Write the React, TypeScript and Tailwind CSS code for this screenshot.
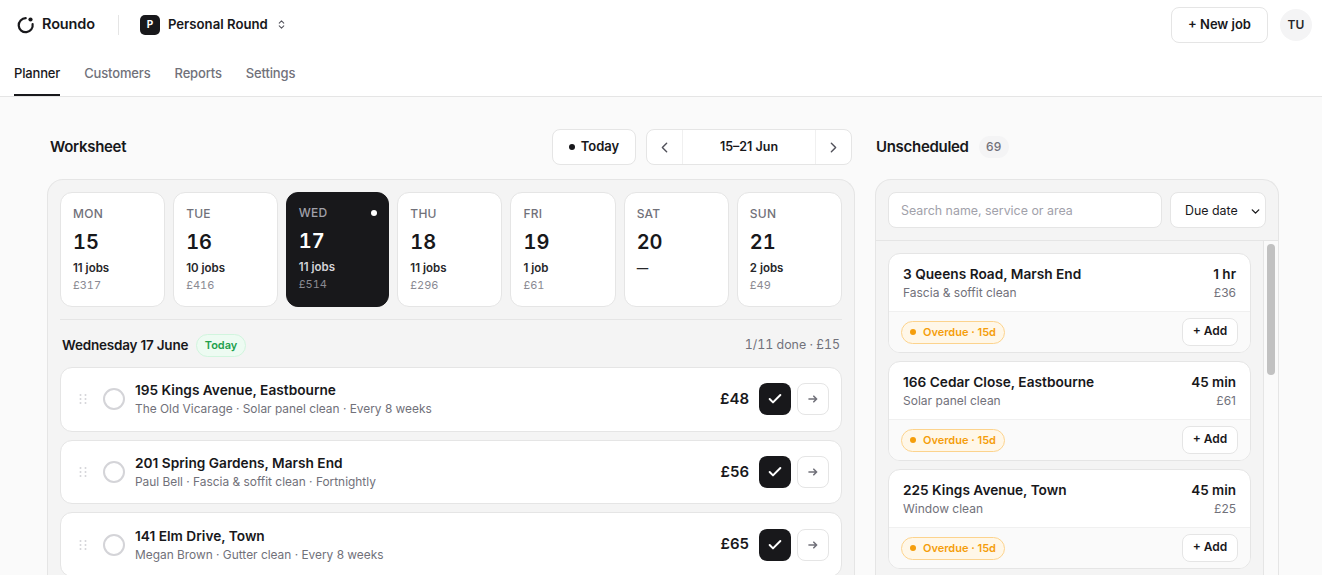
import { ChevronLeft, ChevronRight, ChevronsUpDown, Check, ChevronDown } from "lucide-react";

const days = [
  { name: "MON", date: "15", jobs: "11 jobs", total: "£317" },
  { name: "TUE", date: "16", jobs: "10 jobs", total: "£416" },
  { name: "WED", date: "17", jobs: "11 jobs", total: "£514", active: true },
  { name: "THU", date: "18", jobs: "11 jobs", total: "£296" },
  { name: "FRI", date: "19", jobs: "1 job", total: "£61" },
  { name: "SAT", date: "20", jobs: "—", total: "" },
  { name: "SUN", date: "21", jobs: "2 jobs", total: "£49" },
];

const jobs = [
  { address: "195 Kings Avenue, Eastbourne", detail: "The Old Vicarage · Solar panel clean · Every 8 weeks", price: "£48" },
  { address: "201 Spring Gardens, Marsh End", detail: "Paul Bell · Fascia & soffit clean · Fortnightly", price: "£56" },
  { address: "141 Elm Drive, Town", detail: "Megan Brown · Gutter clean · Every 8 weeks", price: "£65" },
];

const unscheduled = [
  { address: "3 Queens Road, Marsh End", service: "Fascia & soffit clean", time: "1 hr", price: "£36" },
  { address: "166 Cedar Close, Eastbourne", service: "Solar panel clean", time: "45 min", price: "£61" },
  { address: "225 Kings Avenue, Town", service: "Window clean", time: "45 min", price: "£25" },
];

function DragHandle() {
  return (
    <svg width="8" height="10" viewBox="0 0 8 10" className="shrink-0 fill-[#d4d4d8]">
      <circle cx="1.5" cy="1" r="1" />
      <circle cx="6.5" cy="1" r="1" />
      <circle cx="1.5" cy="5" r="1" />
      <circle cx="6.5" cy="5" r="1" />
      <circle cx="1.5" cy="9" r="1" />
      <circle cx="6.5" cy="9" r="1" />
    </svg>
  );
}

function DayCard({ day }: { day: (typeof days)[number] }) {
  if (day.active) {
    return (
      <div className="relative h-[115px] rounded-xl border border-[#18181b] bg-[#18181b] pt-[12px] pr-3 pl-[11.5px]">
        <span className="absolute right-[11px] top-[17px] h-[6px] w-[6px] rounded-full bg-white" />
        <p className="text-xs leading-4 font-medium tracking-[0.02em] text-[#a1a1aa]">{day.name}</p>
        <p className="mt-[6px] text-xl leading-7 font-semibold text-white tabular-nums">{day.date}</p>
        <p className="mt-1 text-[11.5px] leading-4 font-semibold text-[#d4d4d8]">{day.jobs}</p>
        <p className="mt-px text-[11px] leading-4 text-[#8a8a92] tabular-nums">{day.total}</p>
      </div>
    );
  }
  return (
    <div className="h-[115px] rounded-xl border border-[#e5e5e5] bg-white px-3 pt-[13px]">
      <p className="text-xs leading-4 font-medium tracking-[0.02em] text-[#71717a]">{day.name}</p>
      <p className="mt-[6px] text-xl leading-7 font-semibold text-[#18181b] tabular-nums">{day.date}</p>
      <p className="mt-1 text-[11.5px] leading-4 font-semibold text-[#27272a]">{day.jobs}</p>
      <p className="mt-px text-[11px] leading-4 text-[#8a8a92] tabular-nums">{day.total}</p>
    </div>
  );
}

function JobRow({ job }: { job: (typeof jobs)[number] }) {
  return (
    <div className="flex h-[64.65px] shrink-0 items-center rounded-xl border border-[#e5e5e5] bg-white pr-3 pl-[18px]">
      <DragHandle />
      <span className="ml-4 h-[22px] w-[22px] shrink-0 rounded-full border-2 border-[#d4d4d8]" />
      <div className="ml-[10px] min-w-0 flex-1">
        <p className="text-[13.7px] leading-5 font-semibold text-[#18181b]">{job.address}</p>
        <p className="text-[11.9px] leading-[18px] text-[#71717a]">{job.detail}</p>
      </div>
      <span className="text-[15px] font-semibold text-[#18181b]">{job.price}</span>
      <button type="button" className="ml-[10px] flex h-8 w-8 items-center justify-center rounded-lg bg-[#18181b] text-white">
        <Check size={16} strokeWidth={3} />
      </button>
      <button type="button" className="ml-[6px] flex h-8 w-8 items-center justify-center rounded-lg border border-[#e5e5e5] bg-white text-[#71717a]">
        <svg width="10" height="10" viewBox="0 0 10 10" fill="none" stroke="currentColor" strokeWidth="1.6" strokeLinecap="round" strokeLinejoin="round">
          <path d="M1 5h7.5M5.8 2.2 8.6 5 5.8 7.8" />
        </svg>
      </button>
    </div>
  );
}

function UnscheduledCard({ item }: { item: (typeof unscheduled)[number] }) {
  return (
    <div className="h-[100px] shrink-0 overflow-hidden rounded-xl border border-[#e5e5e5] bg-white">
      <div className="flex h-[58px] items-start justify-between border-b border-[#f0f0f0] px-[14px] pt-[10px]">
        <div>
          <p className="text-[13.7px] leading-5 font-semibold text-[#18181b]">{item.address}</p>
          <p className="text-xs leading-[18px] text-[#71717a]">{item.service}</p>
        </div>
        <div className="text-right">
          <p className="text-[13.5px] leading-5 font-semibold text-[#18181b]">{item.time}</p>
          <p className="text-xs leading-[18px] text-[#71717a]">{item.price}</p>
        </div>
      </div>
      <div className="flex h-10 items-center justify-between bg-[#fafafa] pr-3 pl-3">
        <span className="flex h-[23px] items-center gap-[7px] rounded-full border border-[#fcd38d] bg-[#fff7e8] px-2 text-[11px] font-semibold text-[#f59e0b]">
          <span className="h-[6px] w-[6px] rounded-full bg-[#f59e0b]" />
          Overdue · 15d
        </span>
        <button type="button" className="flex h-7 w-[56px] items-center justify-center rounded-lg border border-[#e5e5e5] bg-white pb-[2px] text-xs font-semibold text-[#18181b]">
          + Add
        </button>
      </div>
    </div>
  );
}

export default function App() {
  return (
    <div className="flex h-screen flex-col overflow-hidden bg-[#fafafa] font-['Inter',sans-serif]">
      <header className="h-[97px] shrink-0 border-b border-[#e5e5e5] bg-white">
        <div className="flex h-[49px] items-center pr-[10px] pl-[17px]">
          <svg width="18" height="18" viewBox="0 0 18 18" fill="none" className="shrink-0">
            <path d="M8.7 2.2A7 7 0 1 0 15.6 8" stroke="#18181b" strokeWidth="2.2" strokeLinecap="round" />
            <circle cx="13.5" cy="3.5" r="2.1" fill="#18181b" />
          </svg>
          <span className="mb-[2px] ml-[7px] text-[14.5px] font-semibold tracking-[-0.01em] text-[#18181b]">Roundo</span>
          <span className="ml-[23px] h-5 w-px bg-[#e5e5e5]" />
          <span className="ml-[21px] flex h-5 w-5 items-center justify-center rounded-[5px] bg-[#18181b] text-[10px] font-bold text-white">P</span>
          <span className="ml-2 text-[13.2px] font-semibold text-[#18181b]">Personal Round</span>
          <ChevronsUpDown size={11} strokeWidth={2.2} className="ml-2 text-[#52525b]" />
          <button type="button" className="mr-3 ml-auto h-9 w-[97px] rounded-lg border border-[#e5e5e5] bg-white text-[13px] font-semibold text-[#18181b]">
            + New job
          </button>
          <span className="flex h-8 w-8 items-center justify-center rounded-full bg-[#f4f4f5] text-xs font-semibold text-[#27272a]">TU</span>
        </div>
        <nav className="flex h-[47px] gap-6 pl-[14px] text-[13px] font-medium tracking-[-0.012em] text-[#71717a]">
          <a className="flex h-[47px] items-center border-b-2 border-[#18181b] pt-[4px] text-[#18181b]">Planner</a>
          <a className="flex h-[47px] items-center border-b-2 border-transparent pt-[4px]">Customers</a>
          <a className="flex h-[47px] items-center border-b-2 border-transparent pt-[4px]">Reports</a>
          <a className="flex h-[47px] items-center border-b-2 border-transparent pt-[4px]">Settings</a>
        </nav>
      </header>

      <main className="flex min-h-0 flex-1 gap-5 pt-8 pr-[43px] pl-[47px]">
        <section className="flex w-[808px] shrink-0 flex-col">
          <div className="flex h-9 items-center pr-[3px] pl-[3px]">
            <h2 className="text-[15px] font-semibold tracking-[-0.02em] text-[#18181b]">Worksheet</h2>
            <button type="button" className="ml-auto flex h-9 w-[84px] items-center justify-center gap-[6px] rounded-lg border border-[#e5e5e5] bg-white text-[13px] font-semibold text-[#18181b]">
              <span className="h-[6px] w-[6px] rounded-full bg-[#18181b]" />
              Today
            </button>
            <div className="ml-[10px] flex h-9 w-[206px] items-center rounded-lg border border-[#e5e5e5] bg-white text-[12.5px] font-semibold text-[#18181b]">
              <span className="flex h-full w-9 items-center justify-center border-r border-[#f0f0f0] text-[#52525b]">
                <ChevronLeft size={17} />
              </span>
              <span className="flex-1 text-center">15–21 Jun</span>
              <span className="flex h-full w-9 items-center justify-center border-l border-[#f0f0f0] text-[#52525b]">
                <ChevronRight size={17} />
              </span>
            </div>
          </div>
          <div className="mt-[14px] flex min-h-0 flex-1 flex-col rounded-t-2xl border border-b-0 border-[#e5e5e5] bg-[#f4f4f4] px-3 pt-3">
            <div className="grid grid-cols-[1fr_1fr_103px_1fr_1fr_1fr_1fr] gap-2">
              {days.map((day) => (
                <DayCard key={day.name} day={day} />
              ))}
            </div>
            <div className="mt-3 flex h-12 shrink-0 items-center border-t border-[#e5e5e5] pt-[3px] pr-[2px] pl-[2px]">
              <span className="text-[13.5px] font-semibold tracking-[-0.015em] text-[#18181b]">Wednesday 17 June</span>
              <span className="ml-2 flex h-[23px] items-center rounded-full border border-[#d1f5de] bg-[#edfbf2] px-[7.5px] text-[11px] font-semibold text-[#22a04c]">Today</span>
              <span className="ml-auto text-[12.4px] text-[#71717a] tabular-nums">1/11 done · £15</span>
            </div>
            <div className="flex flex-col gap-2">
              {jobs.map((job) => (
                <JobRow key={job.address} job={job} />
              ))}
            </div>
          </div>
        </section>

        <section className="flex w-[404px] shrink-0 flex-col">
          <div className="flex h-9 items-center gap-[10px] pl-px">
            <h2 className="text-[15px] font-semibold tracking-[-0.02em] text-[#18181b]">Unscheduled</h2>
            <span className="flex h-[22px] w-[30px] items-center justify-center rounded-full bg-[#f4f4f5] text-xs font-medium text-[#71717a]">69</span>
          </div>
          <div className="mt-[14px] flex min-h-0 flex-1 flex-col rounded-t-2xl border border-b-0 border-[#e5e5e5] bg-[#f4f4f4]">
            <div className="flex h-[61px] shrink-0 items-start gap-2 border-b border-[#e5e5e5] px-3 pt-3">
              <div className="flex h-9 w-[274px] items-center rounded-lg border border-[#e5e5e5] bg-white px-3 pt-[2px] text-[12.4px] text-[#a1a1aa]">Search name, service or area</div>
              <div className="flex h-9 w-[96px] items-center justify-between rounded-lg border border-[#e5e5e5] bg-white pt-[2px] pr-[3px] pl-[14px] text-[12.4px] text-[#18181b]">
                Due date
                <ChevronDown size={13} strokeWidth={2.5} />
              </div>
            </div>
            <div className="flex min-h-0 flex-1">
              <div className="flex flex-1 flex-col gap-2 overflow-hidden pt-3 pl-3 pr-3">
                {unscheduled.map((item) => (
                  <UnscheduledCard key={item.address} item={item} />
                ))}
              </div>
              <div className="w-[15px] shrink-0 border-l border-[#e5e5e5] bg-[#fafafa] pt-[3px] pl-[3px]">
                <div className="h-[131px] w-2 rounded-full bg-[#c1c1c1]" />
              </div>
            </div>
          </div>
        </section>
      </main>
    </div>
  );
}
